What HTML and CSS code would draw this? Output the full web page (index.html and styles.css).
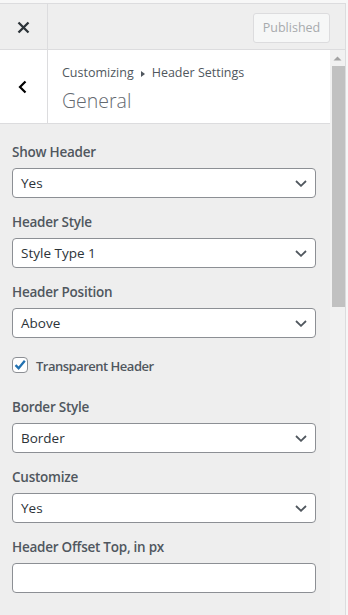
FILE: index.html
```html
<!DOCTYPE html>
<html>
<head>
<meta charset="utf-8">
<link rel="stylesheet" href="styles.css">
</head>
<body>
<div class="panel">
  <div class="topbar">
    <div class="close">
      <svg width="13" height="13" viewBox="0 0 13 13"><path d="M1.5 1.5 L11.5 11.5 M11.5 1.5 L1.5 11.5" stroke="#2c3338" stroke-width="2.3" fill="none"/></svg>
    </div>
    <div class="topbar-right">
      <div class="published">Published</div>
    </div>
  </div>
  <div class="scrollarea">
    <div class="content">
      <div class="heading">
        <div class="back">
          <svg width="9" height="14" viewBox="0 0 9 14"><path d="M7.5 1.5 L2 7 L7.5 12.5" stroke="#000" stroke-width="2.2" fill="none"/></svg>
        </div>
        <div class="titles">
          <div class="crumbs">Customizing <svg class="tri" width="6" height="8" viewBox="0 0 6 8"><path d="M1 1 L5 4 L1 7 Z" fill="#50575e"/></svg> Header Settings</div>
          <div class="title">General</div>
        </div>
      </div>
      <div class="controls">
        <div class="control">
          <div class="label">Show Header</div>
          <div class="select"><span>Yes</span><svg width="12" height="7" viewBox="0 0 12 7"><path d="M1 1 L6 5.8 L11 1" stroke="#50575e" stroke-width="1.8" fill="none"/></svg></div>
        </div>
        <div class="control">
          <div class="label">Header Style</div>
          <div class="select"><span>Style Type 1</span><svg width="12" height="7" viewBox="0 0 12 7"><path d="M1 1 L6 5.8 L11 1" stroke="#50575e" stroke-width="1.8" fill="none"/></svg></div>
        </div>
        <div class="control">
          <div class="label">Header Position</div>
          <div class="select"><span>Above</span><svg width="12" height="7" viewBox="0 0 12 7"><path d="M1 1 L6 5.8 L11 1" stroke="#50575e" stroke-width="1.8" fill="none"/></svg></div>
        </div>
        <div class="control check-row">
          <div class="checkbox"><svg width="14" height="14" viewBox="0 0 14 14"><path d="M2.5 7.2 L5.6 10.2 L11.8 2.8" stroke="#2271b1" stroke-width="2.3" fill="none"/></svg></div>
          <div class="check-label">Transparent Header</div>
        </div>
        <div class="control">
          <div class="label">Border Style</div>
          <div class="select"><span>Border</span><svg width="12" height="7" viewBox="0 0 12 7"><path d="M1 1 L6 5.8 L11 1" stroke="#50575e" stroke-width="1.8" fill="none"/></svg></div>
        </div>
        <div class="control">
          <div class="label">Customize</div>
          <div class="select"><span>Yes</span><svg width="12" height="7" viewBox="0 0 12 7"><path d="M1 1 L6 5.8 L11 1" stroke="#50575e" stroke-width="1.8" fill="none"/></svg></div>
        </div>
        <div class="control">
          <div class="label">Header Offset Top, in px</div>
          <div class="input"></div>
        </div>
      </div>
    </div>
    <div class="scrollbar">
      <div class="arrow"><svg width="9" height="5" viewBox="0 0 9 5"><path d="M0.5 4.5 L4.5 0.5 L8.5 4.5 Z" fill="#a3a3a3"/></svg></div>
      <div class="thumb"></div>
    </div>
  </div>
</div>
</body>
</html>
```

FILE: styles.css
```css
* { box-sizing: border-box; }
html, body { margin: 0; padding: 0; }
body {
  background: #f7f7f7;
  padding-top: 3px;
  font-family: "Open Sans", "Noto Sans", sans-serif;
  color: #50575e;
  height: 615px;
  overflow: hidden;
}
.panel {
  width: 346px;
  height: 612px;
  border-top: 1px solid #dcdcde;
  border-right: 1px solid #dcdcde;
  background: #eeeeee;
  display: flex;
  flex-direction: column;
}
.topbar {
  height: 46px;
  border-bottom: 1px solid #dcdcde;
  display: flex;
  flex-shrink: 0;
}
.close {
  width: 48px;
  border-right: 1px solid #dcdcde;
  display: flex;
  align-items: center;
  justify-content: center;
  padding-top: 1px;
}
.topbar-right {
  flex: 1;
  display: flex;
  align-items: center;
  justify-content: flex-end;
  padding-right: 15px;
  padding-top: 2px;
}
.published {
  width: 77px;
  height: 30px;
  border: 1px solid #dcdcde;
  border-radius: 3px;
  background: #f6f7f7;
  color: #a7aaad;
  font-size: 12.5px;
  display: flex;
  align-items: center;
  justify-content: center;
}
.scrollarea {
  flex: 1;
  display: flex;
  min-height: 0;
}
.content {
  width: 330px;
  display: flex;
  flex-direction: column;
}
.heading {
  height: 74px;
  background: #fff;
  border-bottom: 1px solid #dcdcde;
  display: flex;
}
.back {
  width: 48px;
  border-right: 1px solid #dcdcde;
  display: flex;
  align-items: center;
  justify-content: center;
  padding-right: 3px;
}
.titles {
  padding: 14px 0 0 14px;
}
.crumbs {
  font-size: 12.5px;
  line-height: 18px;
  color: #50575e;
  display: flex;
  align-items: center;
  gap: 6px;
}
.tri { margin-top: 1px; }
.title {
  font-size: 19.5px;
  font-weight: 300;
  line-height: 26px;
  margin-top: 6px;
  color: #646970;
}
.controls {
  padding: 18px 14px 0 12px;
}
.control {
  margin-bottom: 14px;
}
.label {
  font-size: 13.5px;
  font-weight: 600;
  line-height: 20px;
  letter-spacing: -0.25px;
  margin-bottom: 6px;
  color: #50575e;
}
.select, .input {
  height: 30px;
  border: 1px solid #8c8f94;
  border-radius: 4px;
  background: #fff;
}
.select {
  display: flex;
  align-items: center;
  justify-content: space-between;
  padding: 0 8px 0 8px;
  font-size: 13.5px;
  color: #2c3338;
}
.select svg { margin-top: 1px; }
.check-row {
  display: flex;
  align-items: flex-start;
  padding-top: 5px;
  height: 31px;
}
.checkbox {
  width: 16px;
  height: 16px;
  border: 1px solid #8c8f94;
  border-radius: 4px;
  background: #fff;
  display: flex;
  align-items: center;
  justify-content: center;
  margin-right: 8px;
}
.check-label {
  font-size: 13px;
  font-weight: 600;
  letter-spacing: -0.5px;
  line-height: 19px;
  color: #50575e;
}
.scrollbar {
  width: 15px;
  background: #f1f1f1;
  display: flex;
  flex-direction: column;
  align-items: center;
}
.arrow {
  height: 16px;
  display: flex;
  align-items: center;
  justify-content: center;
  padding-top: 1px;
}
.thumb {
  width: 13px;
  height: 241px;
  background: #c1c1c1;
  margin-left: 1px;
}
```
